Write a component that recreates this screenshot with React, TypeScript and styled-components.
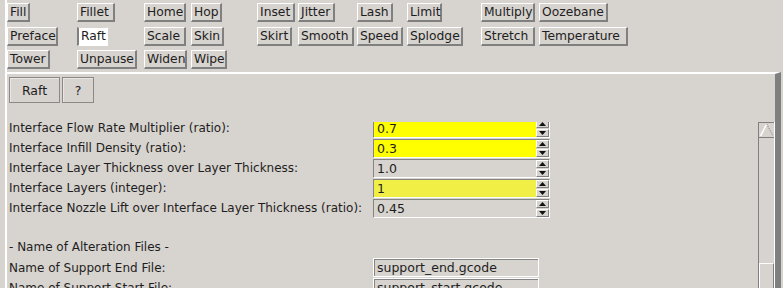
import React from 'react'
import styled, { createGlobalStyle } from 'styled-components'

const BG = '#d7d3cf'
const SHADOW = '#808080'

const GlobalStyle = createGlobalStyle`
  html, body {
    margin: 0;
    padding: 0;
    background: ${BG};
  }
  body {
    font-family: 'DejaVu Sans', 'Liberation Sans', sans-serif;
    font-size: 12px;
    color: #1e1e22;
  }
`

const Window = styled.div`
  width: 783px;
  height: 288px;
  overflow: hidden;
  padding-left: 5px;
  box-sizing: border-box;
  background: ${BG};
`

const Frame = styled.div`
  height: 100%;
  border-left: 2px solid #fff;
  display: flex;
  flex-direction: column;
`

const PluginGrid = styled.div`
  height: 72px;
  flex: none;
  box-sizing: border-box;
  padding-top: 3px;
  display: grid;
  grid-template-columns: 70px 67px 47px 66px 41px 59px 50px 74px 58px auto;
  grid-template-rows: 24px 23px 19px;
  align-items: start;
  justify-items: start;
`

const PluginButton = styled.div<{ $w: number; $active?: boolean }>`
  min-width: ${(p) => p.$w}px;
  height: 19px;
  box-sizing: border-box;
  padding-left: 2px;
  font-size: 12.3px;
  line-height: 16px;
  white-space: nowrap;
  border-style: solid;
  border-width: ${(p) => (p.$active ? '1px 1px 1px 2px' : '1px 2px 2px 1px')};
  border-color: ${(p) =>
    p.$active ? `${BG} #fff #fff ${SHADOW}` : `#fff ${SHADOW} ${SHADOW} #fff`};
  background: ${(p) => (p.$active ? '#fff' : BG)};
`

const SettingsPanel = styled.div`
  flex: 1;
  min-height: 0;
  margin-right: 2px;
  border-top: 2px solid #fff;
  border-right: 6px solid #7f7f7f;
  display: flex;
  flex-direction: column;
`

const TabRow = styled.div`
  display: flex;
  gap: 2px;
  padding: 3px 0 0 2px;
`

const TabButton = styled.div<{ $w: number }>`
  width: ${(p) => p.$w}px;
  height: 26px;
  box-sizing: border-box;
  border: 1px solid #8b8886;
  box-shadow: inset 1px 1px 0 #e9e6e3;
  display: flex;
  align-items: center;
  justify-content: center;
  font-size: 12.5px;
`

const ScrollArea = styled.div`
  flex: 1;
  min-height: 0;
  margin-top: 19px;
  display: flex;
`

const Viewport = styled.div`
  flex: 1;
  overflow: hidden;
  padding-left: 2px;
`

const SettingsGrid = styled.div`
  margin-top: -4px;
  display: grid;
  grid-template-columns: 364px auto;
  grid-auto-rows: 20px;
`

const Label = styled.div<{ $h?: number }>`
  display: flex;
  align-items: center;
  white-space: nowrap;
  ${(p) => (p.$h ? `height: ${p.$h}px;` : '')}
`

const Spacer = styled.div<{ $h: number }>`
  grid-column: 1 / -1;
  height: ${(p) => p.$h}px;
`

const SpinBox = styled.div<{ $bg: string }>`
  width: 177px;
  height: 19px;
  margin-top: 1px;
  box-sizing: border-box;
  display: flex;
  border-style: solid;
  border-width: 1px;
  border-color: #858585 #fff #fff #858585;
  background: ${(p) => p.$bg};
`

const SpinValue = styled.span`
  flex: 1;
  padding-left: 3px;
  line-height: 17px;
  font-size: 12.5px;
`

const SpinButtons = styled.div`
  width: 13px;
  display: flex;
  flex-direction: column;
  gap: 1px;
  background: ${BG};
`

const SpinButton = styled.div`
  flex: 1;
  box-sizing: border-box;
  border-style: solid;
  border-width: 1px;
  border-color: #fff ${SHADOW} ${SHADOW} #fff;
  display: flex;
  align-items: center;
  justify-content: center;
`

const Entry = styled.div`
  width: 166px;
  height: 19px;
  box-sizing: border-box;
  border: 1px solid #fff;
  box-shadow: inset 1px 1px 0 #858585;
  padding-left: 3px;
  line-height: 17px;
  font-size: 12.5px;
`

const Scrollbar = styled.div`
  width: 17px;
  flex: none;
  box-sizing: border-box;
  border-left: 1px solid ${SHADOW};
  border-right: 1px solid #fff;
  display: flex;
  flex-direction: column;
`

const ScrollArrow = styled.div`
  height: 16px;
  box-sizing: border-box;
  border-top: 1px solid ${SHADOW};
  border-bottom: 1px solid ${SHADOW};
`

const ScrollThumb = styled.div`
  flex: 1;
  margin-top: 125px;
  border-top: 1px solid #fff;
  border-left: 1px solid #fff;
  border-right: 1px solid ${SHADOW};
`

const plugins: [string, number][] = [
  ['Fill', 23], ['Fillet', 38], ['Home', 42], ['Hop', 31], ['Inset', 38],
  ['Jitter', 37], ['Lash', 36], ['Limit', 35], ['Multiply', 54], ['Oozebane', 69],
  ['Preface', 51], ['Raft', 31], ['Scale', 42], ['Skin', 33], ['Skirt', 35],
  ['Smooth', 56], ['Speed', 46], ['Splodge', 56], ['Stretch', 54], ['Temperature', 89],
  ['Tower', 43], ['Unpause', 60], ['Widen', 42], ['Wipe', 36],
]

const spinRows = [
  { label: 'Interface Flow Rate Multiplier (ratio):', value: '0.7', bg: '#ffff00' },
  { label: 'Interface Infill Density (ratio):', value: '0.3', bg: '#ffff00' },
  { label: 'Interface Layer Thickness over Layer Thickness:', value: '1.0', bg: BG },
  { label: 'Interface Layers (integer):', value: '1', bg: '#f1ef46' },
  { label: 'Interface Nozzle Lift over Interface Layer Thickness (ratio):', value: '0.45', bg: BG },
]

const fileRows = [
  { label: 'Name of Support End File:', value: 'support_end.gcode' },
  { label: 'Name of Support Start File:', value: 'support_start.gcode' },
]

const Triangle = ({ up }: { up?: boolean }) => (
  <svg width='7' height='4' viewBox='0 0 7 4'>
    <path d={up ? 'M0 4 L3.5 0 L7 4 Z' : 'M0 0 L7 0 L3.5 4 Z'} fill='#111' />
  </svg>
)

const UpArrow = () => (
  <svg width='15' height='14' viewBox='0 0 15 14' style={{ display: 'block' }}>
    <path d='M1.5 13 L7.7 1' stroke='#fff' strokeWidth='1.6' fill='none' />
    <path d='M7.7 1 L14 13' stroke='#7a7a7a' strokeWidth='1' strokeDasharray='1 1.2' fill='none' />
  </svg>
)

export default function App() {
  return (
    <>
      <GlobalStyle />
      <Window>
        <Frame>
          <PluginGrid>
            {plugins.map(([name, w]) => (
              <PluginButton key={name} $w={w} $active={name === 'Raft'}>
                {name}
              </PluginButton>
            ))}
          </PluginGrid>
          <SettingsPanel>
            <TabRow>
              <TabButton $w={51}>Raft</TabButton>
              <TabButton $w={32}>?</TabButton>
            </TabRow>
            <ScrollArea>
              <Viewport>
                <SettingsGrid>
                  {spinRows.map((row) => (
                    <React.Fragment key={row.label}>
                      <Label>{row.label}</Label>
                      <SpinBox $bg={row.bg}>
                        <SpinValue>{row.value}</SpinValue>
                        <SpinButtons>
                          <SpinButton>
                            <Triangle up />
                          </SpinButton>
                          <SpinButton>
                            <Triangle />
                          </SpinButton>
                        </SpinButtons>
                      </SpinBox>
                    </React.Fragment>
                  ))}
                  <Spacer $h={19} />
                  <Label $h={17}>- Name of Alteration Files -</Label>
                  <div />
                  {fileRows.map((row) => (
                    <React.Fragment key={row.label}>
                      <Label>{row.label}</Label>
                      <Entry>{row.value}</Entry>
                    </React.Fragment>
                  ))}
                </SettingsGrid>
              </Viewport>
              <Scrollbar>
                <ScrollArrow>
                  <UpArrow />
                </ScrollArrow>
                <ScrollThumb />
              </Scrollbar>
            </ScrollArea>
          </SettingsPanel>
        </Frame>
      </Window>
    </>
  )
}
